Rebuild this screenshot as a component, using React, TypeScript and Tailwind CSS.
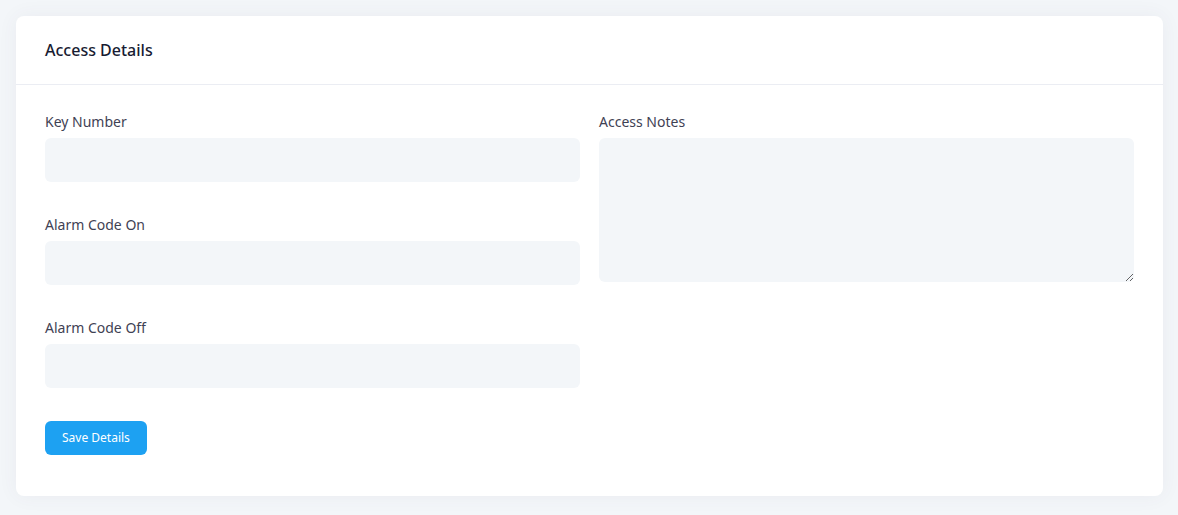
export default function App() {
  const input = "block w-full h-[44px] rounded-md bg-[#f3f6f9] outline-none px-3 text-sm";
  const label = "block text-[14px] leading-5 text-[#3f4254] mb-1.5";
  return (
    <div className="min-h-[515px] bg-[#f3f6f9] p-4 font-['Inter',sans-serif]">
      <div className="bg-white rounded-lg shadow-[0_0_20px_rgba(82,63,105,0.06)] w-[1147px]">
        <div className="h-[69px] px-[29px] flex items-center border-b border-[#ebedf3]">
          <h2 className="text-[16px] font-medium text-[#181c32]">Access Details</h2>
        </div>
        <div className="px-[29px] pt-[27px] pb-[41px]">
          <div className="grid grid-cols-2 gap-x-[19px]">
            <div className="flex flex-col gap-[33px]">
              <div>
                <label className={label}>Key Number</label>
                <input className={input} />
              </div>
              <div>
                <label className={label}>Alarm Code On</label>
                <input className={input} />
              </div>
              <div>
                <label className={label}>Alarm Code Off</label>
                <input className={input} />
              </div>
            </div>
            <div>
              <label className={label}>Access Notes</label>
              <textarea className="block w-full h-[144px] rounded-md bg-[#f3f6f9] outline-none p-3 text-sm" />
            </div>
          </div>
          <button className="mt-[33px] h-[34px] px-[17px] rounded-md bg-[#1da1f2] text-white text-[12px]">
            Save Details
          </button>
        </div>
      </div>
    </div>
  );
}
